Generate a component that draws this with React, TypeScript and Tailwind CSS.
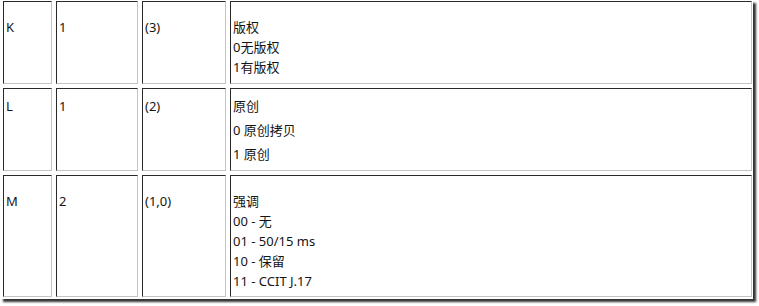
const rows = [
  { h: "h-[83px]", pad: "pt-[15px] leading-[20px]", cells: ["K", "1", "(3)"], notes: ["版权", "0无版权", "1有版权"] },
  { h: "h-[83px]", pad: "pt-[5px] leading-[24px]", cells: ["L", "1", "(2)"], notes: ["原创", "0 原创拷贝", "1 原创"] },
  { h: "h-[122px]", pad: "pt-[15px] leading-[20px]", cells: ["M", "2", "(1,0)"], notes: ["强调", "00 - 无", "01 - 50/15 ms", "10 - 保留", "11 - CCIT J.17"] },
];

const widths = ["w-[49px]", "w-[82px]", "w-[84px]"];

function Cell({ className, children }: { className: string; children: React.ReactNode }) {
  return (
    <div
      className={
        "shrink-0 border-t border-l border-b border-r border-t-[#2a2a2a] border-l-[#2a2a2a] border-b-[#c4c4c4] border-r-[#c4c4c4] pl-[2px] " +
        className
      }
    >
      {children}
    </div>
  );
}

export default function App() {
  return (
    <div className="w-[759px] h-[306px] bg-white">
      <div
        className="w-[753px] h-[299px] bg-white pl-[3px] pt-[1px] flex flex-col gap-[4px] shadow-[3px_3px_2px_rgba(0,0,0,0.8)] text-[13px] text-[#151515]"
        style={{ fontFamily: '"Noto Sans", "Noto Sans CJK SC", sans-serif' }}
      >
        {rows.map((r, i) => (
          <div key={i} className={"flex gap-[4px] " + r.h}>
            {r.cells.map((c, j) => (
              <Cell key={j} className={widths[j] + " " + r.pad}>
                {c}
              </Cell>
            ))}
            <Cell className={"w-[522px] " + r.pad}>
              {r.notes.map((n, k) => (
                <div key={k}>{n}</div>
              ))}
            </Cell>
          </div>
        ))}
      </div>
    </div>
  );
}
